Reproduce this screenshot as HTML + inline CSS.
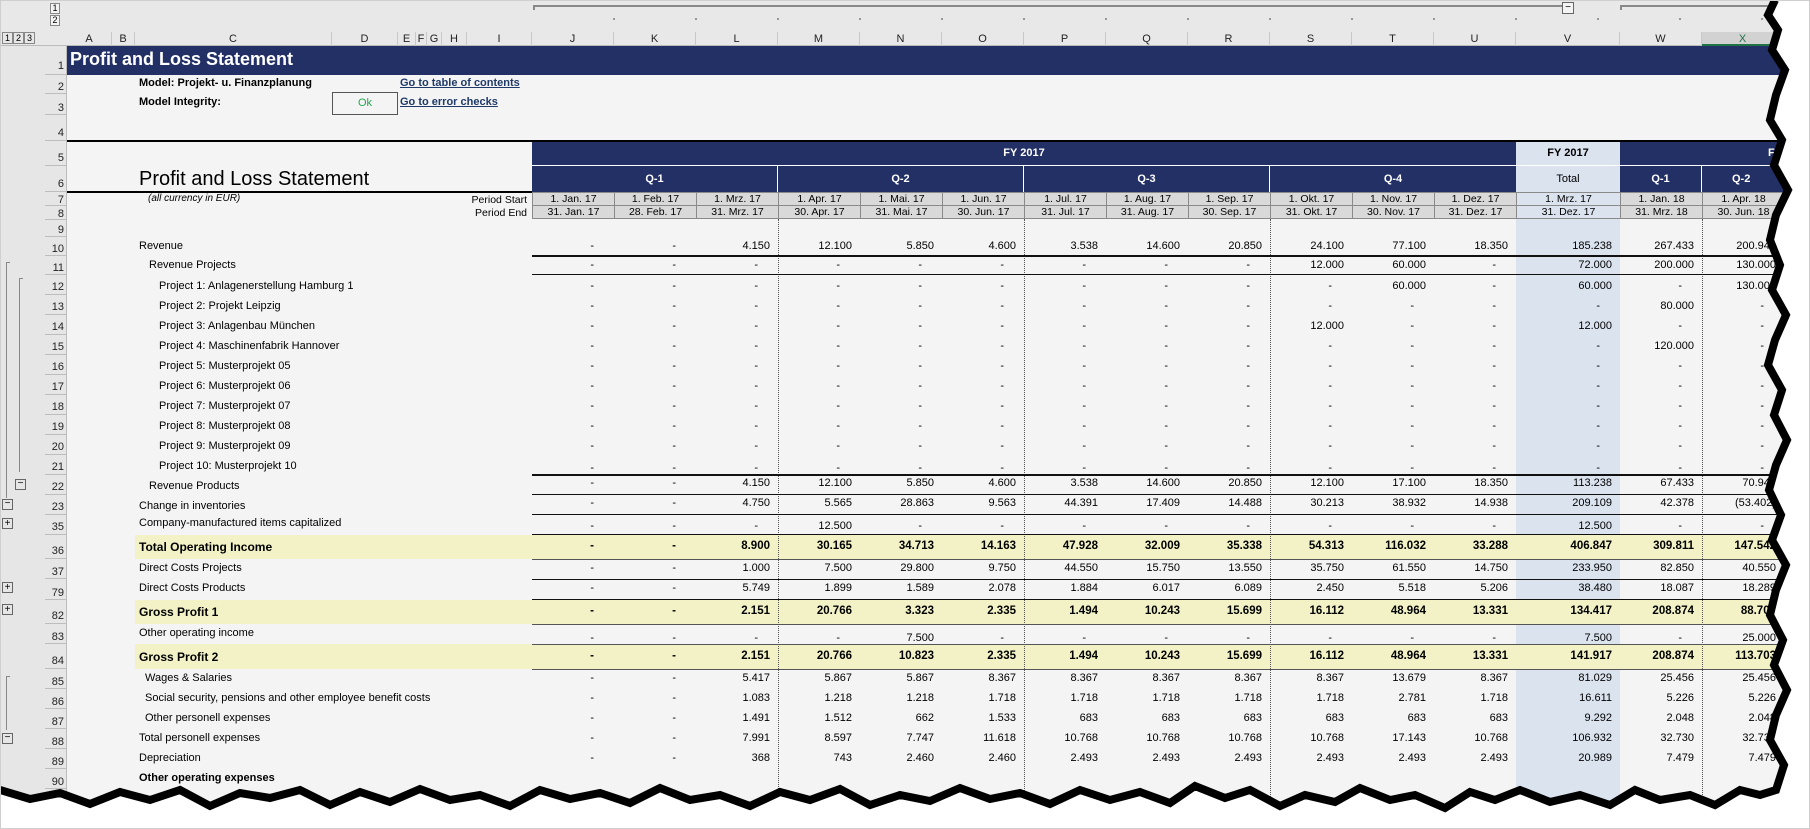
<!DOCTYPE html>
<html><head><meta charset="utf-8"><style>
*{margin:0;padding:0;box-sizing:border-box}
body{width:1810px;height:829px;overflow:hidden;background:#f4f4f4;font-family:"Liberation Sans",Arial,sans-serif;font-size:11px;color:#000;position:relative}
.a{position:absolute}
.r{position:absolute;left:0;width:1810px}
.lb{position:absolute;white-space:nowrap}
.n{position:absolute;left:532px;display:flex}
.n span{display:block;width:82px;text-align:right;padding-right:8px;white-space:nowrap}
.n span:nth-child(13){width:104px}
.n span.d{padding-right:20px}
.b{font-weight:bold}
.hl{position:absolute;left:532px;width:1252px;height:1px;background:#111}
.vd{position:absolute;top:219px;height:590px;border-left:1px dotted #555}
.ch{position:absolute;top:32px;height:14px;line-height:14px;text-align:center;border-right:1px solid #c8c8c8;font-size:11px;color:#222}
.rn{position:absolute;left:45px;width:22px;text-align:right;padding-right:3px;border-bottom:1px solid #bdbdbd;font-size:11px;color:#222}
.dc{position:absolute;height:14px;line-height:13px;text-align:center;background:#d9d9d9;border:1px solid #8a8a8a;font-size:10.5px}
</style></head><body>
<div class="a" style="left:0;top:0;width:1810px;height:46px;background:#e8e8e8"></div>
<div class="a" style="left:0;top:46px;width:67px;height:783px;background:#e6e6e6"></div>
<div class="a" style="left:66px;top:46px;width:1px;height:783px;background:#bbb"></div>
<div class="a" style="left:0;top:45px;width:1810px;height:1px;background:#bbb"></div>
<div class="a" style="left:50px;top:3px;width:10px;height:11px;border:1px solid #888;font-size:9px;line-height:9px;text-align:center;background:#f4f4f4">1</div>
<div class="a" style="left:50px;top:15px;width:10px;height:11px;border:1px solid #888;font-size:9px;line-height:9px;text-align:center;background:#f4f4f4">2</div>
<div class="a" style="left:2px;top:32px;width:11px;height:12px;border:1px solid #888;font-size:9px;line-height:10px;text-align:center">1</div>
<div class="a" style="left:13px;top:32px;width:11px;height:12px;border:1px solid #888;font-size:9px;line-height:10px;text-align:center">2</div>
<div class="a" style="left:24px;top:32px;width:11px;height:12px;border:1px solid #888;font-size:9px;line-height:10px;text-align:center">3</div>
<div class="a" style="left:533px;top:5px;width:1030px;height:2px;background:#888"></div>
<div class="a" style="left:533px;top:5px;width:2px;height:5px;background:#888"></div>
<div class="a" style="left:1562px;top:2px;width:12px;height:12px;border:1px solid #666;background:#f4f4f4;font-size:10px;line-height:9px;text-align:center">−</div>
<div class="a" style="left:1620px;top:5px;width:160px;height:2px;background:#888"></div>
<div class="a" style="left:1620px;top:5px;width:2px;height:5px;background:#888"></div>
<div class="a" style="left:573px;top:18px;width:1200px;height:2px;background:repeating-linear-gradient(90deg,transparent 0 40px,#999 40px 42px,transparent 42px 82px)"></div>
<div class="ch" style="left:67px;width:45px">A</div>
<div class="ch" style="left:112px;width:23px">B</div>
<div class="ch" style="left:135px;width:197px">C</div>
<div class="ch" style="left:332px;width:66px">D</div>
<div class="ch" style="left:398px;width:18px">E</div>
<div class="ch" style="left:416px;width:11px">F</div>
<div class="ch" style="left:427px;width:15px">G</div>
<div class="ch" style="left:442px;width:25px">H</div>
<div class="ch" style="left:467px;width:65px">I</div>
<div class="ch" style="left:532px;width:82px">J</div>
<div class="ch" style="left:614px;width:82px">K</div>
<div class="ch" style="left:696px;width:82px">L</div>
<div class="ch" style="left:778px;width:82px">M</div>
<div class="ch" style="left:860px;width:82px">N</div>
<div class="ch" style="left:942px;width:82px">O</div>
<div class="ch" style="left:1024px;width:82px">P</div>
<div class="ch" style="left:1106px;width:82px">Q</div>
<div class="ch" style="left:1188px;width:82px">R</div>
<div class="ch" style="left:1270px;width:82px">S</div>
<div class="ch" style="left:1352px;width:82px">T</div>
<div class="ch" style="left:1434px;width:82px">U</div>
<div class="ch" style="left:1516px;width:104px">V</div>
<div class="ch" style="left:1620px;width:82px">W</div>
<div class="ch" style="left:1702px;width:82px;background:#d2d2d2;border-bottom:2px solid #217346;color:#217346">X</div>
<div class="rn" style="top:46px;height:29px;line-height:40px">1</div>
<div class="rn" style="top:75px;height:19px;line-height:24px">2</div>
<div class="rn" style="top:94px;height:21px;line-height:28px">3</div>
<div class="rn" style="top:115px;height:26px;line-height:36px">4</div>
<div class="rn" style="top:141px;height:25px;line-height:34px">5</div>
<div class="rn" style="top:166px;height:26px;line-height:36px">6</div>
<div class="rn" style="top:192px;height:14px;line-height:16px">7</div>
<div class="rn" style="top:206px;height:14px;line-height:16px">8</div>
<div class="rn" style="top:220px;height:17px;line-height:20px">9</div>
<div class="rn" style="top:237px;height:19px;line-height:24px">10</div>
<div class="rn" style="top:256px;height:19px;line-height:24px">11</div>
<div class="rn" style="top:275px;height:20px;line-height:24px">12</div>
<div class="rn" style="top:295px;height:20px;line-height:24px">13</div>
<div class="rn" style="top:315px;height:20px;line-height:24px">14</div>
<div class="rn" style="top:335px;height:20px;line-height:24px">15</div>
<div class="rn" style="top:355px;height:20px;line-height:24px">16</div>
<div class="rn" style="top:375px;height:20px;line-height:24px">17</div>
<div class="rn" style="top:395px;height:20px;line-height:24px">18</div>
<div class="rn" style="top:415px;height:20px;line-height:24px">19</div>
<div class="rn" style="top:435px;height:20px;line-height:24px">20</div>
<div class="rn" style="top:455px;height:20px;line-height:24px">21</div>
<div class="rn" style="top:475px;height:20px;line-height:24px">22</div>
<div class="rn" style="top:495px;height:20px;line-height:24px">23</div>
<div class="rn" style="top:515px;height:20px;line-height:24px">35</div>
<div class="rn" style="top:535px;height:24px;line-height:32px">36</div>
<div class="rn" style="top:559px;height:20px;line-height:26px">37</div>
<div class="rn" style="top:579px;height:21px;line-height:28px">79</div>
<div class="rn" style="top:600px;height:24px;line-height:32px">82</div>
<div class="rn" style="top:624px;height:20px;line-height:26px">83</div>
<div class="rn" style="top:644px;height:25px;line-height:34px">84</div>
<div class="rn" style="top:669px;height:20px;line-height:26px">85</div>
<div class="rn" style="top:689px;height:20px;line-height:26px">86</div>
<div class="rn" style="top:709px;height:20px;line-height:26px">87</div>
<div class="rn" style="top:729px;height:20px;line-height:26px">88</div>
<div class="rn" style="top:749px;height:20px;line-height:26px">89</div>
<div class="rn" style="top:769px;height:20px;line-height:26px">90</div>
<div class="a" style="left:6px;top:262px;width:4px;height:236px;border-left:1px solid #888;border-top:1px solid #888"></div>
<div class="a" style="left:19px;top:278px;width:4px;height:194px;border-left:1px solid #888;border-top:1px solid #888"></div>
<div class="a" style="left:15px;top:479px;width:11px;height:11px;border:1px solid #666;font-size:10px;line-height:8px;text-align:center">−</div>
<div class="a" style="left:2px;top:499px;width:11px;height:11px;border:1px solid #666;font-size:10px;line-height:8px;text-align:center">−</div>
<div class="a" style="left:2px;top:518px;width:11px;height:11px;border:1px solid #666;font-size:10px;line-height:9px;text-align:center">+</div>
<div class="a" style="left:2px;top:582px;width:11px;height:11px;border:1px solid #666;font-size:10px;line-height:9px;text-align:center">+</div>
<div class="a" style="left:2px;top:604px;width:11px;height:11px;border:1px solid #666;font-size:10px;line-height:9px;text-align:center">+</div>
<div class="a" style="left:6px;top:676px;width:4px;height:54px;border-left:1px solid #888;border-top:1px solid #888"></div>
<div class="a" style="left:2px;top:733px;width:11px;height:11px;border:1px solid #666;font-size:10px;line-height:8px;text-align:center">−</div>

<div class="a" style="left:67px;top:46px;width:1743px;height:29px;background:#233066"></div>
<div class="lb b" style="left:70px;top:49px;font-size:18px;color:#fff">Profit and Loss Statement</div>
<div class="lb b" style="left:139px;top:77px">Model: Projekt- u. Finanzplanung</div>
<div class="lb b" style="left:400px;top:77px;color:#1f3a68;text-decoration:underline">Go to table of contents</div>
<div class="lb b" style="left:139px;top:96px">Model Integrity:</div>
<div class="a" style="left:332px;top:92px;width:66px;height:23px;border:1px solid #555;color:#1fa84f;text-align:center;line-height:21px">Ok</div>
<div class="lb b" style="left:400px;top:96px;color:#1f3a68;text-decoration:underline">Go to error checks</div>
<div class="a" style="left:67px;top:140px;width:1743px;height:2px;background:#000"></div>

<div class="a" style="left:1516px;top:142px;width:104px;height:670px;background:#dbe3ef"></div>

<div class="a" style="left:532px;top:142px;width:984px;height:23px;background:#233066;color:#fff;text-align:center;line-height:23px" ><b>FY 2017</b></div>
<div class="a b" style="left:1516px;top:142px;width:104px;height:23px;text-align:center;line-height:23px">FY 2017</div>
<div class="a" style="left:1620px;top:142px;width:190px;height:23px;background:#233066;color:#fff;line-height:23px;padding-left:148px"><b>F</b></div>
<div class="a" style="left:532px;top:165px;width:1278px;height:1px;background:#fff"></div>
<div class="a b" style="left:532px;top:166px;width:246px;height:26px;background:#233066;color:#fff;text-align:center;line-height:26px;border-right:1px solid #fff">Q-1</div>
<div class="a b" style="left:778px;top:166px;width:246px;height:26px;background:#233066;color:#fff;text-align:center;line-height:26px;border-right:1px solid #fff">Q-2</div>
<div class="a b" style="left:1024px;top:166px;width:246px;height:26px;background:#233066;color:#fff;text-align:center;line-height:26px;border-right:1px solid #fff">Q-3</div>
<div class="a b" style="left:1270px;top:166px;width:246px;height:26px;background:#233066;color:#fff;text-align:center;line-height:26px">Q-4</div>
<div class="a" style="left:1516px;top:166px;width:104px;height:26px;text-align:center;line-height:26px">Total</div>
<div class="a b" style="left:1620px;top:166px;width:82px;height:26px;background:#233066;color:#fff;text-align:center;line-height:26px;border-right:1px solid #fff">Q-1</div>
<div class="a b" style="left:1702px;top:166px;width:108px;height:26px;background:#233066;color:#fff;line-height:26px;padding-left:30px">Q-2</div>
<div class="lb" style="left:139px;top:168px;font-size:20px">Profit and Loss Statement</div>
<div class="a" style="left:67px;top:191px;width:465px;height:2px;background:#000"></div>
<div class="lb" style="left:148px;top:193px;font-style:italic;font-size:10px">(all currency in EUR)</div>
<div class="lb" style="left:470px;top:194px;width:57px;text-align:right;font-size:10.5px">Period Start</div>
<div class="lb" style="left:470px;top:207px;width:57px;text-align:right;font-size:10.5px">Period End</div>
<div class="dc" style="left:532px;top:192px;width:83px">1. Jan. 17</div><div class="dc" style="left:614px;top:192px;width:83px">1. Feb. 17</div><div class="dc" style="left:696px;top:192px;width:83px">1. Mrz. 17</div><div class="dc" style="left:778px;top:192px;width:83px">1. Apr. 17</div><div class="dc" style="left:860px;top:192px;width:83px">1. Mai. 17</div><div class="dc" style="left:942px;top:192px;width:83px">1. Jun. 17</div><div class="dc" style="left:1024px;top:192px;width:83px">1. Jul. 17</div><div class="dc" style="left:1106px;top:192px;width:83px">1. Aug. 17</div><div class="dc" style="left:1188px;top:192px;width:83px">1. Sep. 17</div><div class="dc" style="left:1270px;top:192px;width:83px">1. Okt. 17</div><div class="dc" style="left:1352px;top:192px;width:83px">1. Nov. 17</div><div class="dc" style="left:1434px;top:192px;width:83px">1. Dez. 17</div><div class="dc" style="left:1516px;top:192px;width:105px;background:#dbe3ef">1. Mrz. 17</div><div class="dc" style="left:1620px;top:192px;width:83px">1. Jan. 18</div><div class="dc" style="left:1702px;top:192px;width:83px">1. Apr. 18</div>
<div class="dc" style="left:532px;top:205px;width:83px">31. Jan. 17</div><div class="dc" style="left:614px;top:205px;width:83px">28. Feb. 17</div><div class="dc" style="left:696px;top:205px;width:83px">31. Mrz. 17</div><div class="dc" style="left:778px;top:205px;width:83px">30. Apr. 17</div><div class="dc" style="left:860px;top:205px;width:83px">31. Mai. 17</div><div class="dc" style="left:942px;top:205px;width:83px">30. Jun. 17</div><div class="dc" style="left:1024px;top:205px;width:83px">31. Jul. 17</div><div class="dc" style="left:1106px;top:205px;width:83px">31. Aug. 17</div><div class="dc" style="left:1188px;top:205px;width:83px">30. Sep. 17</div><div class="dc" style="left:1270px;top:205px;width:83px">31. Okt. 17</div><div class="dc" style="left:1352px;top:205px;width:83px">30. Nov. 17</div><div class="dc" style="left:1434px;top:205px;width:83px">31. Dez. 17</div><div class="dc" style="left:1516px;top:205px;width:105px;background:#dbe3ef">31. Dez. 17</div><div class="dc" style="left:1620px;top:205px;width:83px">31. Mrz. 18</div><div class="dc" style="left:1702px;top:205px;width:83px">30. Jun. 18</div>

<div class="a" style="left:135px;top:535px;width:1675px;height:24px;background:#f2f2c6"></div>
<div class="a" style="left:135px;top:600px;width:1675px;height:24px;background:#f2f2c6"></div>
<div class="a" style="left:135px;top:644px;width:1675px;height:25px;background:#f2f2c6"></div>

<div class="vd" style="left:778px"></div><div class="vd" style="left:1024px"></div><div class="vd" style="left:1270px"></div><div class="vd" style="left:1702px"></div>

<div class="hl" style="top:255px;height:2px"></div>
<div class="hl" style="top:274px"></div>
<div class="hl" style="top:474px;height:2px"></div>
<div class="hl" style="top:494px"></div>
<div class="hl" style="top:514px"></div>
<div class="hl" style="top:534px"></div>
<div class="hl" style="top:559px;background:#555"></div>
<div class="hl" style="top:579px"></div>
<div class="hl" style="top:599px"></div>
<div class="hl" style="top:624px;background:#555"></div>
<div class="hl" style="top:644px;background:#555"></div>
<div class="hl" style="top:669px;background:#555"></div>

<div class="r" style="top:240px"><div class="lb" style="left:139px">Revenue</div><div class="n"><span class="d">-</span><span class="d">-</span><span>4.150</span><span>12.100</span><span>5.850</span><span>4.600</span><span>3.538</span><span>14.600</span><span>20.850</span><span>24.100</span><span>77.100</span><span>18.350</span><span>185.238</span><span>267.433</span><span>200.945</span></div></div>
<div class="r" style="top:259px"><div class="lb" style="left:149px">Revenue Projects</div><div class="n"><span class="d">-</span><span class="d">-</span><span class="d">-</span><span class="d">-</span><span class="d">-</span><span class="d">-</span><span class="d">-</span><span class="d">-</span><span class="d">-</span><span>12.000</span><span>60.000</span><span class="d">-</span><span>72.000</span><span>200.000</span><span>130.000</span></div></div>
<div class="r" style="top:280px"><div class="lb" style="left:159px">Project 1: Anlagenerstellung Hamburg 1</div><div class="n"><span class="d">-</span><span class="d">-</span><span class="d">-</span><span class="d">-</span><span class="d">-</span><span class="d">-</span><span class="d">-</span><span class="d">-</span><span class="d">-</span><span class="d">-</span><span>60.000</span><span class="d">-</span><span>60.000</span><span class="d">-</span><span>130.000</span></div></div>
<div class="r" style="top:300px"><div class="lb" style="left:159px">Project 2: Projekt Leipzig</div><div class="n"><span class="d">-</span><span class="d">-</span><span class="d">-</span><span class="d">-</span><span class="d">-</span><span class="d">-</span><span class="d">-</span><span class="d">-</span><span class="d">-</span><span class="d">-</span><span class="d">-</span><span class="d">-</span><span class="d">-</span><span>80.000</span><span class="d">-</span></div></div>
<div class="r" style="top:320px"><div class="lb" style="left:159px">Project 3: Anlagenbau München</div><div class="n"><span class="d">-</span><span class="d">-</span><span class="d">-</span><span class="d">-</span><span class="d">-</span><span class="d">-</span><span class="d">-</span><span class="d">-</span><span class="d">-</span><span>12.000</span><span class="d">-</span><span class="d">-</span><span>12.000</span><span class="d">-</span><span class="d">-</span></div></div>
<div class="r" style="top:340px"><div class="lb" style="left:159px">Project 4: Maschinenfabrik Hannover</div><div class="n"><span class="d">-</span><span class="d">-</span><span class="d">-</span><span class="d">-</span><span class="d">-</span><span class="d">-</span><span class="d">-</span><span class="d">-</span><span class="d">-</span><span class="d">-</span><span class="d">-</span><span class="d">-</span><span class="d">-</span><span>120.000</span><span class="d">-</span></div></div>
<div class="r" style="top:360px"><div class="lb" style="left:159px">Project 5: Musterprojekt 05</div><div class="n"><span class="d">-</span><span class="d">-</span><span class="d">-</span><span class="d">-</span><span class="d">-</span><span class="d">-</span><span class="d">-</span><span class="d">-</span><span class="d">-</span><span class="d">-</span><span class="d">-</span><span class="d">-</span><span class="d">-</span><span class="d">-</span><span class="d">-</span></div></div>
<div class="r" style="top:380px"><div class="lb" style="left:159px">Project 6: Musterprojekt 06</div><div class="n"><span class="d">-</span><span class="d">-</span><span class="d">-</span><span class="d">-</span><span class="d">-</span><span class="d">-</span><span class="d">-</span><span class="d">-</span><span class="d">-</span><span class="d">-</span><span class="d">-</span><span class="d">-</span><span class="d">-</span><span class="d">-</span><span class="d">-</span></div></div>
<div class="r" style="top:400px"><div class="lb" style="left:159px">Project 7: Musterprojekt 07</div><div class="n"><span class="d">-</span><span class="d">-</span><span class="d">-</span><span class="d">-</span><span class="d">-</span><span class="d">-</span><span class="d">-</span><span class="d">-</span><span class="d">-</span><span class="d">-</span><span class="d">-</span><span class="d">-</span><span class="d">-</span><span class="d">-</span><span class="d">-</span></div></div>
<div class="r" style="top:420px"><div class="lb" style="left:159px">Project 8: Musterprojekt 08</div><div class="n"><span class="d">-</span><span class="d">-</span><span class="d">-</span><span class="d">-</span><span class="d">-</span><span class="d">-</span><span class="d">-</span><span class="d">-</span><span class="d">-</span><span class="d">-</span><span class="d">-</span><span class="d">-</span><span class="d">-</span><span class="d">-</span><span class="d">-</span></div></div>
<div class="r" style="top:440px"><div class="lb" style="left:159px">Project 9: Musterprojekt 09</div><div class="n"><span class="d">-</span><span class="d">-</span><span class="d">-</span><span class="d">-</span><span class="d">-</span><span class="d">-</span><span class="d">-</span><span class="d">-</span><span class="d">-</span><span class="d">-</span><span class="d">-</span><span class="d">-</span><span class="d">-</span><span class="d">-</span><span class="d">-</span></div></div>
<div class="r" style="top:460px"><div class="lb" style="left:159px">Project 10: Musterprojekt 10</div><div class="n" style="top:2px"><span class="d">-</span><span class="d">-</span><span class="d">-</span><span class="d">-</span><span class="d">-</span><span class="d">-</span><span class="d">-</span><span class="d">-</span><span class="d">-</span><span class="d">-</span><span class="d">-</span><span class="d">-</span><span class="d">-</span><span class="d">-</span><span class="d">-</span></div></div>
<div class="r" style="top:480px"><div class="lb" style="left:149px">Revenue Products</div><div class="n" style="top:-3px"><span class="d">-</span><span class="d">-</span><span>4.150</span><span>12.100</span><span>5.850</span><span>4.600</span><span>3.538</span><span>14.600</span><span>20.850</span><span>12.100</span><span>17.100</span><span>18.350</span><span>113.238</span><span>67.433</span><span>70.945</span></div></div>
<div class="r" style="top:500px"><div class="lb" style="left:139px">Change in inventories</div><div class="n" style="top:-3px"><span class="d">-</span><span class="d">-</span><span>4.750</span><span>5.565</span><span>28.863</span><span>9.563</span><span>44.391</span><span>17.409</span><span>14.488</span><span>30.213</span><span>38.932</span><span>14.938</span><span>209.109</span><span>42.378</span><span>(53.402)</span></div></div>
<div class="r" style="top:517px"><div class="lb" style="left:139px">Company-manufactured items capitalized</div><div class="n" style="top:3px"><span class="d">-</span><span class="d">-</span><span class="d">-</span><span>12.500</span><span class="d">-</span><span class="d">-</span><span class="d">-</span><span class="d">-</span><span class="d">-</span><span class="d">-</span><span class="d">-</span><span class="d">-</span><span>12.500</span><span class="d">-</span><span class="d">-</span></div></div>
<div class="r b" style="top:540px;font-size:11.5px"><div class="lb" style="left:139px;font-size:12px">Total Operating Income</div><div class="n"><span class="d">-</span><span class="d">-</span><span>8.900</span><span>30.165</span><span>34.713</span><span>14.163</span><span>47.928</span><span>32.009</span><span>35.338</span><span>54.313</span><span>116.032</span><span>33.288</span><span>406.847</span><span>309.811</span><span>147.542</span></div></div>
<div class="r" style="top:562px"><div class="lb" style="left:139px">Direct Costs Projects</div><div class="n"><span class="d">-</span><span class="d">-</span><span>1.000</span><span>7.500</span><span>29.800</span><span>9.750</span><span>44.550</span><span>15.750</span><span>13.550</span><span>35.750</span><span>61.550</span><span>14.750</span><span>233.950</span><span>82.850</span><span>40.550</span></div></div>
<div class="r" style="top:582px"><div class="lb" style="left:139px">Direct Costs Products</div><div class="n"><span class="d">-</span><span class="d">-</span><span>5.749</span><span>1.899</span><span>1.589</span><span>2.078</span><span>1.884</span><span>6.017</span><span>6.089</span><span>2.450</span><span>5.518</span><span>5.206</span><span>38.480</span><span>18.087</span><span>18.289</span></div></div>
<div class="r b" style="top:605px;font-size:11.5px"><div class="lb" style="left:139px;font-size:12px">Gross Profit 1</div><div class="n"><span class="d">-</span><span class="d">-</span><span>2.151</span><span>20.766</span><span>3.323</span><span>2.335</span><span>1.494</span><span>10.243</span><span>15.699</span><span>16.112</span><span>48.964</span><span>13.331</span><span>134.417</span><span>208.874</span><span>88.703</span></div></div>
<div class="r" style="top:627px"><div class="lb" style="left:139px">Other operating income</div><div class="n" style="top:5px"><span class="d">-</span><span class="d">-</span><span class="d">-</span><span class="d">-</span><span>7.500</span><span class="d">-</span><span class="d">-</span><span class="d">-</span><span class="d">-</span><span class="d">-</span><span class="d">-</span><span class="d">-</span><span>7.500</span><span class="d">-</span><span>25.000</span></div></div>
<div class="r b" style="top:650px;font-size:11.5px"><div class="lb" style="left:139px;font-size:12px">Gross Profit 2</div><div class="n"><span class="d">-</span><span class="d">-</span><span>2.151</span><span>20.766</span><span>10.823</span><span>2.335</span><span>1.494</span><span>10.243</span><span>15.699</span><span>16.112</span><span>48.964</span><span>13.331</span><span>141.917</span><span>208.874</span><span>113.703</span></div></div>
<div class="r" style="top:672px"><div class="lb" style="left:145px">Wages &amp; Salaries</div><div class="n"><span class="d">-</span><span class="d">-</span><span>5.417</span><span>5.867</span><span>5.867</span><span>8.367</span><span>8.367</span><span>8.367</span><span>8.367</span><span>8.367</span><span>13.679</span><span>8.367</span><span>81.029</span><span>25.456</span><span>25.456</span></div></div>
<div class="r" style="top:692px"><div class="lb" style="left:145px">Social security, pensions and other employee benefit costs</div><div class="n"><span class="d">-</span><span class="d">-</span><span>1.083</span><span>1.218</span><span>1.218</span><span>1.718</span><span>1.718</span><span>1.718</span><span>1.718</span><span>1.718</span><span>2.781</span><span>1.718</span><span>16.611</span><span>5.226</span><span>5.226</span></div></div>
<div class="r" style="top:712px"><div class="lb" style="left:145px">Other personell expenses</div><div class="n"><span class="d">-</span><span class="d">-</span><span>1.491</span><span>1.512</span><span>662</span><span>1.533</span><span>683</span><span>683</span><span>683</span><span>683</span><span>683</span><span>683</span><span>9.292</span><span>2.048</span><span>2.048</span></div></div>
<div class="r" style="top:732px"><div class="lb" style="left:139px">Total personell expenses</div><div class="n"><span class="d">-</span><span class="d">-</span><span>7.991</span><span>8.597</span><span>7.747</span><span>11.618</span><span>10.768</span><span>10.768</span><span>10.768</span><span>10.768</span><span>17.143</span><span>10.768</span><span>106.932</span><span>32.730</span><span>32.730</span></div></div>
<div class="r" style="top:752px"><div class="lb" style="left:139px">Depreciation</div><div class="n"><span class="d">-</span><span class="d">-</span><span>368</span><span>743</span><span>2.460</span><span>2.460</span><span>2.493</span><span>2.493</span><span>2.493</span><span>2.493</span><span>2.493</span><span>2.493</span><span>20.989</span><span>7.479</span><span>7.479</span></div></div>
<div class="r b" style="top:772px"><div class="lb" style="left:139px">Other operating expenses</div></div>

<svg class="a" style="left:0;top:0" width="1810" height="829" viewBox="0 0 1810 829">
<path fill="#fff" d="M1810,0 L1775,0 L1768,15 L1778,30 L1772,50 L1785,70 L1776,95 L1770,120 L1782,140 L1774,165 L1788,190 L1776,215 L1770,240 L1780,265 L1772,290 L1786,315 L1775,340 L1768,365 L1782,390 L1774,415 L1787,440 L1776,465 L1769,490 L1781,515 L1772,540 L1786,565 L1776,590 L1770,615 L1783,640 L1774,665 L1787,690 L1776,715 L1770,740 L1784,765 L1776,790 L1760,795 L1740,790 L1715,805 L1690,795 L1660,800 L1635,790 L1610,805 L1580,795 L1550,802 L1520,790 L1495,800 L1470,792 L1445,808 L1415,795 L1390,800 L1360,788 L1335,802 L1305,795 L1280,806 L1250,790 L1225,798 L1195,786 L1170,803 L1140,792 L1110,800 L1080,790 L1050,804 L1020,793 L990,799 L960,788 L930,801 L900,795 L870,805 L840,789 L810,800 L780,792 L750,806 L720,795 L690,800 L660,788 L630,803 L600,793 L570,799 L540,790 L510,806 L480,795 L450,800 L420,789 L390,802 L360,792 L330,805 L300,790 L270,798 L240,793 L210,806 L180,790 L150,800 L120,792 L90,804 L60,793 L30,799 L0,790 L0,829 L1810,829 Z"/>
<path fill="none" stroke="#000" stroke-width="8" stroke-linejoin="miter" d="M1775,0 L1768,15 L1778,30 L1772,50 L1785,70 L1776,95 L1770,120 L1782,140 L1774,165 L1788,190 L1776,215 L1770,240 L1780,265 L1772,290 L1786,315 L1775,340 L1768,365 L1782,390 L1774,415 L1787,440 L1776,465 L1769,490 L1781,515 L1772,540 L1786,565 L1776,590 L1770,615 L1783,640 L1774,665 L1787,690 L1776,715 L1770,740 L1784,765 L1776,790 L1760,795 L1740,790 L1715,805 L1690,795 L1660,800 L1635,790 L1610,805 L1580,795 L1550,802 L1520,790 L1495,800 L1470,792 L1445,808 L1415,795 L1390,800 L1360,788 L1335,802 L1305,795 L1280,806 L1250,790 L1225,798 L1195,786 L1170,803 L1140,792 L1110,800 L1080,790 L1050,804 L1020,793 L990,799 L960,788 L930,801 L900,795 L870,805 L840,789 L810,800 L780,792 L750,806 L720,795 L690,800 L660,788 L630,803 L600,793 L570,799 L540,790 L510,806 L480,795 L450,800 L420,789 L390,802 L360,792 L330,805 L300,790 L270,798 L240,793 L210,806 L180,790 L150,800 L120,792 L90,804 L60,793 L30,799 L0,790"/>
<rect x="0.5" y="0.5" width="1809" height="828" fill="none" stroke="#cfcfcf"/>
</svg>
</body></html>
